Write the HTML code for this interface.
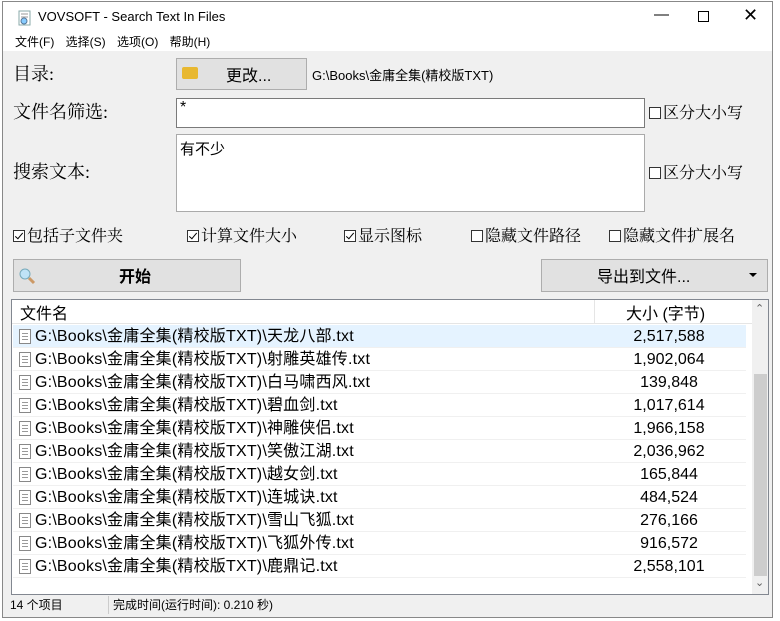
<!DOCTYPE html>
<html><head><meta charset="utf-8"><style>
*{margin:0;padding:0;box-sizing:border-box}
body{width:780px;height:621px;background:#fff;position:relative;overflow:hidden;font-family:"Liberation Sans","Noto Sans CJK SC",sans-serif;color:#000}
.win{position:absolute;left:2px;top:1px;width:771px;height:617px;border:1px solid #888;background:#f0f0f0}
.a{position:absolute;white-space:nowrap}
.serif{font-family:"Liberation Serif","Noto Serif CJK SC",serif}
.cb{display:inline-block;width:12px;height:12px;border:1px solid #333;background:#fff;vertical-align:-1px;margin-right:2px;position:relative}
.cb.on::after{content:"";position:absolute;left:3px;top:0px;width:3px;height:7px;border:solid #000;border-width:0 1.5px 1.5px 0;transform:rotate(40deg)}
.btn{position:absolute;background:#e1e1e1;border:1px solid #adadad}
.row{position:absolute;left:1px;height:23px;width:733px;font-size:16px;line-height:23px;border-bottom:1px solid #f0f0f0}
.row .n{position:absolute;left:22px;letter-spacing:0.2px}
.row .s{position:absolute;left:582px;width:148px;text-align:center}
.ic{position:absolute;left:6px;top:4px;width:12px;height:15px;border:1px solid #888;background:#fff}
.ic::after{content:"";position:absolute;left:2px;top:3px;width:6px;height:7px;background:repeating-linear-gradient(#999 0 1px,transparent 1px 3px)}
</style></head><body>
<div class="win">
<div class="a" style="left:0;top:0;width:769px;height:49px;background:#fff"></div>
<svg class="a" style="left:14px;top:8px" width="16" height="16"><rect x="2" y="1" width="11" height="14" fill="#fff" stroke="#8aa"/><line x1="4" y1="4" x2="11" y2="4" stroke="#999"/><line x1="4" y1="7" x2="11" y2="7" stroke="#999"/><circle cx="7" cy="11" r="3" fill="#8cf" stroke="#579"/></svg>
<div class="a" style="left:35px;top:7px;font-size:13px">VOVSOFT - Search Text In Files</div>
<div class="a" style="left:651px;top:4px;font-size:15px">&#8212;</div>
<div class="a" style="left:695px;top:9px;width:11px;height:11px;border:1px solid #000"></div>
<div class="a" style="left:740px;top:3px;font-size:18px;font-weight:300">✕</div>
<div class="a" style="left:12px;top:31px;font-size:12px;word-spacing:8px">文件(F) 选择(S) 选项(O) 帮助(H)</div>

<div class="a serif" style="left:10px;top:58px;font-size:18px">目录:</div>
<div class="btn" style="left:173px;top:56px;width:131px;height:32px"></div>
<div class="a" style="left:179px;top:65px;width:16px;height:12px;background:#e8b830;border-radius:2px"></div>
<div class="a" style="left:223px;top:60px;font-size:16px">更改...</div>
<div class="a" style="left:309px;top:63px;font-size:13px">G:\Books\金庸全集(精校版TXT)</div>

<div class="a serif" style="left:10px;top:96px;font-size:18px">文件名筛选:</div>
<div class="a" style="left:173px;top:96px;width:469px;height:30px;background:#fff;border:1px solid #7a7a7a"></div>
<div class="a" style="left:177px;top:97px;font-size:16px">*</div>
<div class="a serif" style="left:646px;top:98px;font-size:16px"><span class="cb"></span>区分大小写</div>

<div class="a serif" style="left:10px;top:156px;font-size:18px">搜索文本:</div>
<div class="a" style="left:173px;top:132px;width:469px;height:78px;background:#fff;border:1px solid #aaa"></div>
<div class="a" style="left:177px;top:136px;font-size:15px">有不少</div>
<div class="a serif" style="left:646px;top:158px;font-size:16px"><span class="cb"></span>区分大小写</div>

<div class="a serif" style="left:10px;top:221px;font-size:16px"><span class="cb on"></span>包括子文件夹</div>
<div class="a serif" style="left:184px;top:221px;font-size:16px"><span class="cb on"></span>计算文件大小</div>
<div class="a serif" style="left:341px;top:221px;font-size:16px"><span class="cb on"></span>显示图标</div>
<div class="a serif" style="left:468px;top:221px;font-size:16px"><span class="cb"></span>隐藏文件路径</div>
<div class="a serif" style="left:606px;top:221px;font-size:16px"><span class="cb"></span>隐藏文件扩展名</div>

<div class="btn" style="left:10px;top:257px;width:228px;height:33px"></div>
<svg class="a" style="left:15px;top:265px" width="18" height="18"><circle cx="7" cy="7" r="5" fill="#bfe3f7" stroke="#7ab"/><line x1="11" y1="11" x2="16" y2="16" stroke="#c96" stroke-width="3"/></svg>
<div class="a" style="left:116px;top:261px;font-size:16px;font-weight:bold">开始</div>
<div class="btn" style="left:538px;top:257px;width:227px;height:33px"></div>
<div class="a" style="left:594px;top:261px;font-size:16px">导出到文件...</div>
<div class="a" style="left:746px;top:271px;border:4px solid transparent;border-top:4px solid #000"></div>

<div class="a" style="left:8px;top:297px;width:758px;height:296px;background:#fff;border:1px solid #828790;overflow:hidden">
 <div class="a" style="left:0;top:0;width:740px;height:24px;border-bottom:1px solid #e5e5e5"></div>
 <div class="a" style="left:582px;top:0;width:1px;height:24px;background:#e5e5e5"></div>
 <div class="a" style="left:8px;top:0px;font-size:16px">文件名</div>
 <div class="a" style="left:614px;top:0px;font-size:16px">大小 (字节)</div>
 <div class="row" style="top:25px;background:#e5f3ff"><i class="ic"></i><span class="n">G:\Books\金庸全集(精校版TXT)\天龙八部.txt</span><span class="s">2,517,588</span></div>
 <div class="row" style="top:48px"><i class="ic"></i><span class="n">G:\Books\金庸全集(精校版TXT)\射雕英雄传.txt</span><span class="s">1,902,064</span></div>
 <div class="row" style="top:71px"><i class="ic"></i><span class="n">G:\Books\金庸全集(精校版TXT)\白马啸西风.txt</span><span class="s">139,848</span></div>
 <div class="row" style="top:94px"><i class="ic"></i><span class="n">G:\Books\金庸全集(精校版TXT)\碧血剑.txt</span><span class="s">1,017,614</span></div>
 <div class="row" style="top:117px"><i class="ic"></i><span class="n">G:\Books\金庸全集(精校版TXT)\神雕侠侣.txt</span><span class="s">1,966,158</span></div>
 <div class="row" style="top:140px"><i class="ic"></i><span class="n">G:\Books\金庸全集(精校版TXT)\笑傲江湖.txt</span><span class="s">2,036,962</span></div>
 <div class="row" style="top:163px"><i class="ic"></i><span class="n">G:\Books\金庸全集(精校版TXT)\越女剑.txt</span><span class="s">165,844</span></div>
 <div class="row" style="top:186px"><i class="ic"></i><span class="n">G:\Books\金庸全集(精校版TXT)\连城诀.txt</span><span class="s">484,524</span></div>
 <div class="row" style="top:209px"><i class="ic"></i><span class="n">G:\Books\金庸全集(精校版TXT)\雪山飞狐.txt</span><span class="s">276,166</span></div>
 <div class="row" style="top:232px"><i class="ic"></i><span class="n">G:\Books\金庸全集(精校版TXT)\飞狐外传.txt</span><span class="s">916,572</span></div>
 <div class="row" style="top:255px"><i class="ic"></i><span class="n">G:\Books\金庸全集(精校版TXT)\鹿鼎记.txt</span><span class="s">2,558,101</span></div>
 <div class="a" style="left:740px;top:0;width:17px;height:294px;background:#f0f0f0"></div>
 <div class="a" style="left:742px;top:74px;width:13px;height:202px;background:#cdcdcd"></div>
 <div class="a" style="left:743px;top:2px;font-size:11px;color:#606060">&#8963;</div>
 <div class="a" style="left:743px;top:276px;font-size:11px;color:#606060">&#8964;</div>
</div>
<div class="a" style="left:7px;top:594px;font-size:12px">14 个项目</div>
<div class="a" style="left:105px;top:594px;width:1px;height:18px;background:#ccc"></div>
<div class="a" style="left:110px;top:594px;font-size:12px">完成时间(运行时间): 0.210 秒)</div>
</div>
</body></html>
